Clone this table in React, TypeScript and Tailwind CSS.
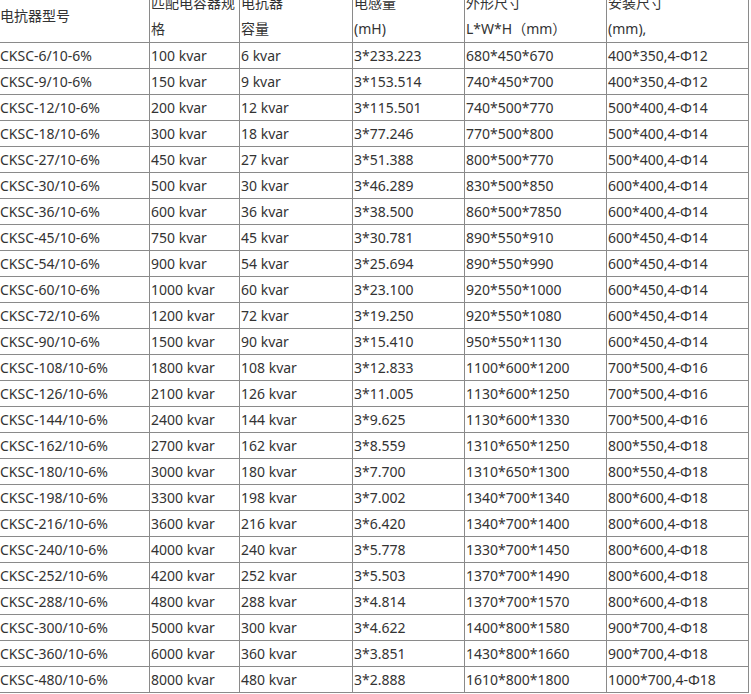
import React from "react";

const rows: string[][] = [
  ["CKSC-6/10-6%", "100 kvar", "6 kvar", "3*233.223", "680*450*670", "400*350,4-Φ12"],
  ["CKSC-9/10-6%", "150 kvar", "9 kvar", "3*153.514", "740*450*700", "400*350,4-Φ12"],
  ["CKSC-12/10-6%", "200 kvar", "12 kvar", "3*115.501", "740*500*770", "500*400,4-Φ14"],
  ["CKSC-18/10-6%", "300 kvar", "18 kvar", "3*77.246", "770*500*800", "500*400,4-Φ14"],
  ["CKSC-27/10-6%", "450 kvar", "27 kvar", "3*51.388", "800*500*770", "500*400,4-Φ14"],
  ["CKSC-30/10-6%", "500 kvar", "30 kvar", "3*46.289", "830*500*850", "600*400,4-Φ14"],
  ["CKSC-36/10-6%", "600 kvar", "36 kvar", "3*38.500", "860*500*7850", "600*400,4-Φ14"],
  ["CKSC-45/10-6%", "750 kvar", "45 kvar", "3*30.781", "890*550*910", "600*450,4-Φ14"],
  ["CKSC-54/10-6%", "900 kvar", "54 kvar", "3*25.694", "890*550*990", "600*450,4-Φ14"],
  ["CKSC-60/10-6%", "1000 kvar", "60 kvar", "3*23.100", "920*550*1000", "600*450,4-Φ14"],
  ["CKSC-72/10-6%", "1200 kvar", "72 kvar", "3*19.250", "920*550*1080", "600*450,4-Φ14"],
  ["CKSC-90/10-6%", "1500 kvar", "90 kvar", "3*15.410", "950*550*1130", "600*450,4-Φ14"],
  ["CKSC-108/10-6%", "1800 kvar", "108 kvar", "3*12.833", "1100*600*1200", "700*500,4-Φ16"],
  ["CKSC-126/10-6%", "2100 kvar", "126 kvar", "3*11.005", "1130*600*1250", "700*500,4-Φ16"],
  ["CKSC-144/10-6%", "2400 kvar", "144 kvar", "3*9.625", "1130*600*1330", "700*500,4-Φ16"],
  ["CKSC-162/10-6%", "2700 kvar", "162 kvar", "3*8.559", "1310*650*1250", "800*550,4-Φ18"],
  ["CKSC-180/10-6%", "3000 kvar", "180 kvar", "3*7.700", "1310*650*1300", "800*550,4-Φ18"],
  ["CKSC-198/10-6%", "3300 kvar", "198 kvar", "3*7.002", "1340*700*1340", "800*600,4-Φ18"],
  ["CKSC-216/10-6%", "3600 kvar", "216 kvar", "3*6.420", "1340*700*1400", "800*600,4-Φ18"],
  ["CKSC-240/10-6%", "4000 kvar", "240 kvar", "3*5.778", "1330*700*1450", "800*600,4-Φ18"],
  ["CKSC-252/10-6%", "4200 kvar", "252 kvar", "3*5.503", "1370*700*1490", "800*600,4-Φ18"],
  ["CKSC-288/10-6%", "4800 kvar", "288 kvar", "3*4.814", "1370*700*1570", "800*600,4-Φ18"],
  ["CKSC-300/10-6%", "5000 kvar", "300 kvar", "3*4.622", "1400*800*1580", "900*700,4-Φ18"],
  ["CKSC-360/10-6%", "6000 kvar", "360 kvar", "3*3.851", "1430*800*1660", "900*700,4-Φ18"],
  ["CKSC-480/10-6%", "8000 kvar", "480 kvar", "3*2.888", "1610*800*1800", "1000*700,4-Φ18"],
];

const widths = ["w-[151px]", "w-[90px]", "w-[113px]", "w-[112px]", "w-[142px]", "w-[142px]"];

const head = "border border-[#8a8a8a] px-[1px] leading-[26px] whitespace-nowrap";

export default function App() {
  return (
    <div className="w-[751px] h-[694px] overflow-hidden bg-white">
      <table
        className="-mt-[11px] -ml-[2px] border-collapse table-fixed w-[751px] border-r border-b border-r-[#222] border-b-[#222] text-[14px] text-[#333]"
        style={{ fontFamily: '"Noto Sans", "Noto Sans CJK SC", sans-serif' }}
      >
        <colgroup>
          {widths.map((w, i) => (
            <col key={i} className={w} />
          ))}
        </colgroup>
        <tbody>
          <tr>
            <td className={`${head} align-middle`}>电抗器型号</td>
            <td className={`${head} overflow-hidden`}>
              匹配电容器规
              <br />格
            </td>
            <td className={head}>
              电抗器
              <br />容量
            </td>
            <td className={head}>
              电感量
              <br />(mH)
            </td>
            <td className={head}>
              外形尺寸
              <br />L*W*H（mm）
            </td>
            <td className={head}>
              安装尺寸
              <br />(mm),
            </td>
          </tr>
          {rows.map((r, i) => (
            <tr key={i}>
              {r.map((c, j) => (
                <td
                  key={j}
                  className="border border-[#8a8a8a] px-[1px] h-[26px] leading-[25px] whitespace-nowrap"
                >
                  {c}
                </td>
              ))}
            </tr>
          ))}
        </tbody>
      </table>
    </div>
  );
}
